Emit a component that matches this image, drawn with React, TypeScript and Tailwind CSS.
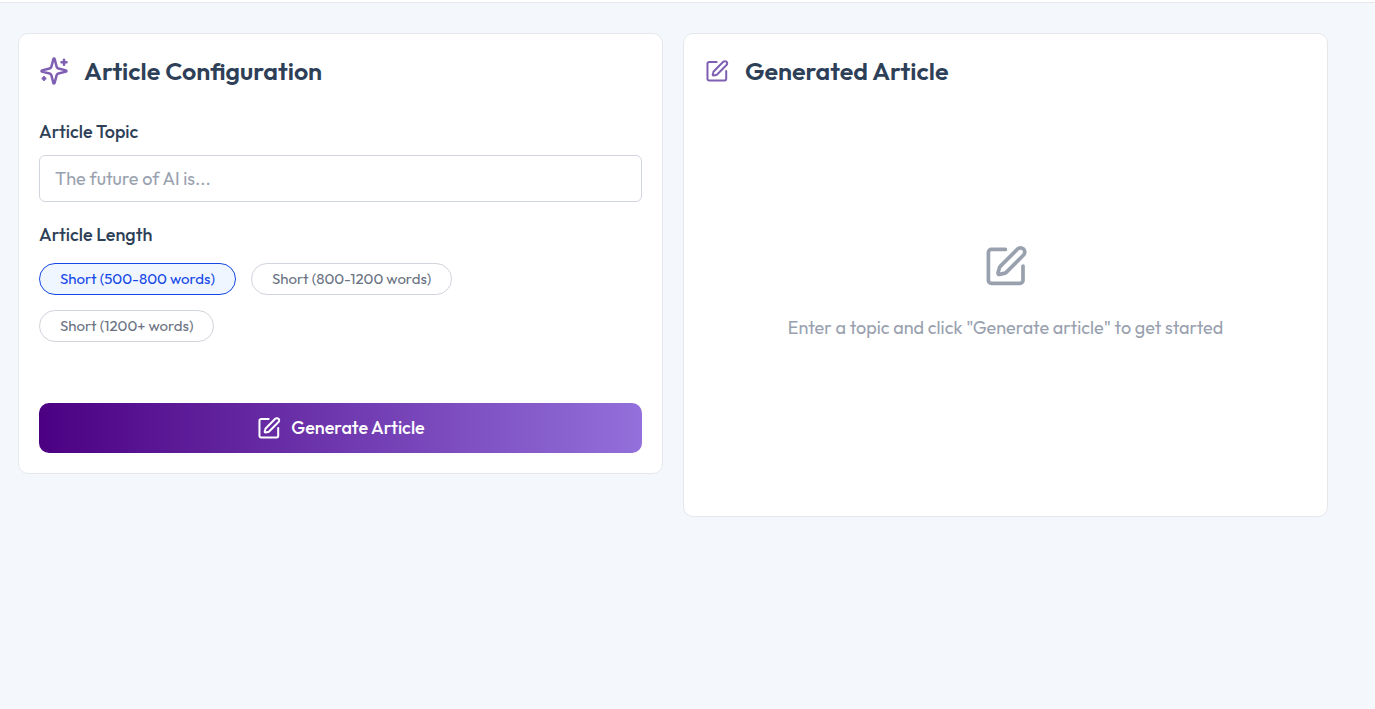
import { useState } from "react";

const lengths = ["Short (500-800 words)", "Short (800-1200 words)", "Short (1200+ words)"];

function EditIcon({ className }: { className: string }) {
  return (
    <svg
      viewBox="0 0 24 24"
      fill="none"
      stroke="currentColor"
      strokeWidth="1.85"
      strokeLinecap="round"
      strokeLinejoin="round"
      aria-hidden="true"
      className={className}
    >
      <path d="M11.7 3.7H4.7A1.5 1.5 0 0 0 3.2 5.2v14a1.5 1.5 0 0 0 1.5 1.5h14.3a1.5 1.5 0 0 0 1.5-1.5v-7.2" />
      <path d="M20.77 3.53a2.12 2.12 0 0 0-3 0L9.1 12.2a2 2 0 0 0-.5 1L8 15.5a.6.6 0 0 0 .7.7l2.4-.5a2 2 0 0 0 1-.5l8.67-8.67a2.12 2.12 0 0 0 0-3z" />
    </svg>
  );
}

function SparklesIcon({ className }: { className: string }) {
  return (
    <svg
      viewBox="0 0 24 24"
      fill="none"
      stroke="currentColor"
      strokeWidth="2"
      strokeLinecap="round"
      strokeLinejoin="round"
      aria-hidden="true"
      className={className}
    >
      <path d="M9.937 15.5A2 2 0 0 0 8.5 14.063l-6.135-1.582a.5.5 0 0 1 0-.962L8.5 9.936A2 2 0 0 0 9.937 8.5l1.582-6.135a.5.5 0 0 1 .963 0L14.063 8.5A2 2 0 0 0 15.5 9.937l6.135 1.581a.5.5 0 0 1 0 .964L15.5 14.063a2 2 0 0 0-1.437 1.437l-1.582 6.135a.5.5 0 0 1-.963 0z" />
      <path d="M20 3v4M22 5h-4M4 17v2M5 18H3" />
    </svg>
  );
}

export default function App() {
  const [selected, setSelected] = useState(lengths[0]);
  return (
    <div className="min-h-screen bg-[#f4f7fb] font-['Outfit','Lato',sans-serif] text-[#2e3f58]">
      <header className="h-[3px] border-b border-gray-200 bg-white" />
      <main className="grid grid-cols-2 items-start gap-5 pt-[30px] pr-[47px] pb-8 pl-[18px]">
        <form className="rounded-[10px] border border-gray-200 bg-white p-5" onSubmit={(e) => e.preventDefault()}>
          <div className="flex h-[34px] items-center gap-[15px]">
            <SparklesIcon className="size-[30px] text-[#7e5fb3]" />
            <h1 className="text-[25px] leading-8 font-semibold">Article Configuration</h1>
          </div>
          <label htmlFor="topic" className="mt-[30px] block text-lg leading-7 font-medium">Article Topic</label>
          <input
            id="topic"
            type="text"
            placeholder="The future of AI is..."
            className="mt-[9px] block h-[47px] w-full rounded-md border border-gray-300 px-[15px] text-lg outline-none placeholder:text-gray-400"
          />
          <fieldset className="mt-[19px]">
            <legend className="text-lg leading-7 font-medium">Article Length</legend>
            <div className="mt-[14px] flex flex-wrap gap-[15px] pr-5">
              {lengths.map((item) => (
                <button
                  key={item}
                  type="button"
                  aria-pressed={selected === item}
                  onClick={() => setSelected(item)}
                  className={
                    selected === item
                      ? "h-8 rounded-full border border-blue-700 bg-blue-50 px-5 text-[15px] text-blue-700"
                      : "h-8 rounded-full border border-gray-300 px-5 text-[15px] text-gray-500"
                  }
                >
                  {item}
                </button>
              ))}
            </div>
          </fieldset>
          <button type="submit" className="mt-[61px] flex h-[50px] w-full items-center justify-center gap-[9px] rounded-[10px] bg-linear-to-r/srgb from-[#4b0082] to-[#9370db] text-lg font-medium text-white">
            <EditIcon className="size-[26px]" />
            Generate Article
          </button>
        </form>
        <section className="flex min-h-[484px] flex-col rounded-[10px] border border-gray-200 bg-white p-5">
          <div className="flex h-[34px] items-center gap-[15px]">
            <EditIcon className="size-[26px] text-[#7e5fb3]" />
            <h2 className="text-[25px] leading-8 font-semibold">Generated Article</h2>
          </div>
          <div className="flex grow flex-col items-center justify-center gap-6 text-lg text-gray-400">
            <EditIcon className="size-12" />
            <p>Enter a topic and click "Generate article" to get started</p>
          </div>
        </section>
      </main>
    </div>
  );
}
